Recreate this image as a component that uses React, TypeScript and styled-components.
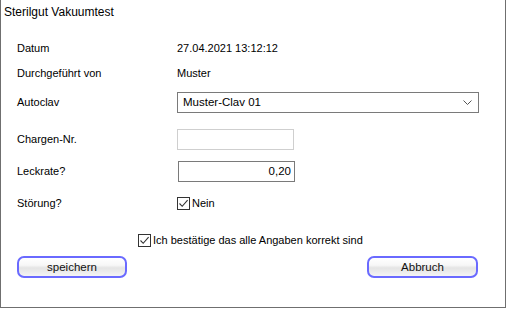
import React, { useState } from "react";
import styled, { createGlobalStyle } from "styled-components";

/**
 * STYLES
 */
const GlobalStyle = createGlobalStyle`
  html, body {
    margin: 0;
    padding: 0;
    background: #ffffff;
  }
  body {
    font-family: "Liberation Sans", Arial, sans-serif;
    color: #000;
  }
`;

const StyledWindow = styled.div`
  box-sizing: border-box;
  width: 506px;
  height: 308px;
  background: #ffffff;
  border-left: 1px solid #6f6f6f;
  border-right: 1px solid #6f6f6f;
  border-bottom: 1px solid #6f6f6f;
  display: flex;
  flex-direction: column;
`;

const StyledTitle = styled.div`
  height: 24px;
  padding-left: 3px;
  display: flex;
  align-items: center;
  font-size: 12px;
  color: #000;
`;

const StyledForm = styled.div`
  padding: 12px 0 0 16px;
  display: flex;
  flex-direction: column;
`;

const StyledRow = styled.div<{ $h: number }>`
  height: ${(p) => p.$h}px;
  display: grid;
  grid-template-columns: 160px 1fr;
  align-items: center;
  font-size: 11px;
`;

const StyledLabel = styled.div`
  color: #000;
`;

const StyledValue = styled.div`
  color: #000;
`;

const StyledSelect = styled.div`
  box-sizing: border-box;
  width: 302px;
  height: 21px;
  border: 1px solid #7a7a7a;
  background: #fff;
  display: flex;
  align-items: center;
  justify-content: space-between;
  padding: 0 6px 0 5px;
  font-size: 11.5px;
`;

const StyledInput = styled.input<{ $disabled?: boolean }>`
  box-sizing: border-box;
  width: 117px;
  height: 21px;
  border: 1px solid ${(p) => (p.$disabled ? "#cfcfcf" : "#7a7a7a")};
  background: #fff;
  padding: 0 3px;
  font-family: "Liberation Sans", Arial, sans-serif;
  font-size: 11.5px;
  text-align: right;
  outline: none;
  color: #000;
  margin-left: ${(p) => (p.$disabled ? 0 : 1)}px;
`;

const StyledCheckLabel = styled.label`
  display: inline-flex;
  align-items: center;
  gap: 2px;
  font-size: 11px;
  cursor: pointer;
`;

const StyledBox = styled.span`
  box-sizing: border-box;
  width: 13px;
  height: 13px;
  border: 1px solid #333;
  background: #fff;
  display: inline-flex;
  align-items: center;
  justify-content: center;
`;

const StyledConfirm = styled.div`
  height: 32px;
  padding-left: 121px;
  display: flex;
  align-items: center;
`;

const StyledButtons = styled.div`
  display: flex;
  justify-content: space-between;
  width: 461px;
`;

const StyledButton = styled.button<{ $w: number }>`
  box-sizing: border-box;
  width: ${(p) => p.$w}px;
  height: 22px;
  border: 2px solid #6a6aff;
  border-radius: 7px;
  background: linear-gradient(#ffffff 0%, #f7f7f7 40%, #e4e4e4 55%, #f4f4f4 100%);
  font-family: "Liberation Sans", Arial, sans-serif;
  font-size: 11.5px;
  color: #111;
  padding: 0;
  cursor: pointer;
`;

/**
 * COMPONENTS
 */
const Check = ({ checked }: { checked: boolean }) => (
  <StyledBox>
    {checked && (
      <svg width="11" height="11" viewBox="0 0 11 11">
        <path d="M1.5 5.5 L4.2 8.3 L9.6 2.2" fill="none" stroke="#333" strokeWidth="1.1" />
      </svg>
    )}
  </StyledBox>
);

const Chevron = () => (
  <svg width="9" height="5" viewBox="0 0 9 5">
    <path d="M0.5 0.5 L4.5 4.5 L8.5 0.5" fill="none" stroke="#555" strokeWidth="1" />
  </svg>
);

export const App = () => {
  const [stoerung, setStoerung] = useState(true);
  const [confirmed, setConfirmed] = useState(true);

  return (
    <StyledWindow>
      <GlobalStyle />
      <StyledTitle>Sterilgut Vakuumtest</StyledTitle>
      <StyledForm>
        <StyledRow $h={24}>
          <StyledLabel>Datum</StyledLabel>
          <StyledValue>27.04.2021 13:12:12</StyledValue>
        </StyledRow>
        <StyledRow $h={26}>
          <StyledLabel>Durchgeführt von</StyledLabel>
          <StyledValue>Muster</StyledValue>
        </StyledRow>
        <StyledRow $h={32}>
          <StyledLabel>Autoclav</StyledLabel>
          <StyledSelect>
            <span>Muster-Clav 01</span>
            <Chevron />
          </StyledSelect>
        </StyledRow>
        <StyledRow $h={42}>
          <StyledLabel>Chargen-Nr.</StyledLabel>
          <StyledInput $disabled readOnly value="" />
        </StyledRow>
        <StyledRow $h={22}>
          <StyledLabel>Leckrate?</StyledLabel>
          <StyledInput defaultValue="0,20" />
        </StyledRow>
        <StyledRow $h={42}>
          <StyledLabel>Störung?</StyledLabel>
          <StyledCheckLabel onClick={() => setStoerung(!stoerung)}>
            <Check checked={stoerung} />
            Nein
          </StyledCheckLabel>
        </StyledRow>
        <StyledConfirm>
          <StyledCheckLabel onClick={() => setConfirmed(!confirmed)}>
            <Check checked={confirmed} />
            Ich bestätige das alle Angaben korrekt sind
          </StyledCheckLabel>
        </StyledConfirm>
        <StyledButtons>
          <StyledButton $w={110}>speichern</StyledButton>
          <StyledButton $w={111}>Abbruch</StyledButton>
        </StyledButtons>
      </StyledForm>
    </StyledWindow>
  );
};

export default App;
